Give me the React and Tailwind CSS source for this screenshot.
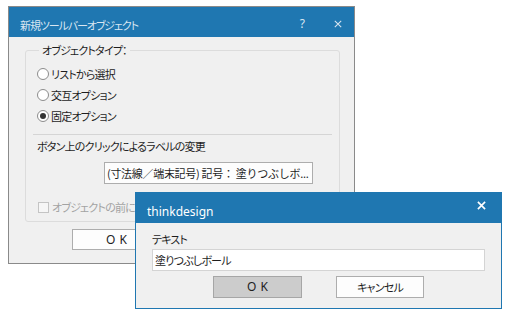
const jp = "font-['Noto_Sans_CJK_JP','Noto_Sans',sans-serif] [font-feature-settings:'palt'] text-[11px] tracking-[-0.8px]";

function Radio({ checked, label }) {
  return (
    <div className="flex h-[21px] items-center">
      <span className="flex h-[12px] w-[12px] items-center justify-center rounded-full border border-[#8c8c8c] bg-white">
        {checked && <span className="h-[6px] w-[6px] rounded-full bg-[#333333]" />}
      </span>
      <span className="ml-[2px] leading-[16px]">{label}</span>
    </div>
  );
}

function CloseIcon({ className, width = 1.4 }) {
  return (
    <svg viewBox="0 0 10 10" className={className}>
      <path d="M1 1 L9 9 M9 1 L1 9" stroke="currentColor" strokeWidth={width} fill="none" />
    </svg>
  );
}

export default function App() {
  return (
    <div className={`relative h-[320px] w-[510px] overflow-hidden bg-white text-[#1e1e1e] ${jp}`}>
      {/* main dialog */}
      <div className="absolute left-[8px] top-[6px] flex h-[258px] w-[347px] flex-col border border-[#8a8a8a] bg-[#f0f0f0]">
        <div className="flex h-[30px] shrink-0 justify-between bg-[#1f77b1] text-[#d9e6f1]">
          <span className="ml-[11px] mt-[10px] leading-[16px] tracking-[-1.1px]">新規ツールバーオブジェクト</span>
          <div className="mr-[12px] mt-[3px] flex items-center gap-[29px]">
            <span className="font-['Noto_Sans',sans-serif] text-[12px] leading-[16px] tracking-normal">?</span>
            <CloseIcon className="h-[8px] w-[8px]" width={1.3} />
          </div>
        </div>
        <fieldset className="ml-[16px] mt-[5px] h-[180px] w-[315px] rounded-[3px] border border-[#dcdcdc] px-[7px] pt-[5px]">
          <legend className="ml-[6px] px-[3px] leading-[16px]">オブジェクトタイプ：</legend>
          <div className="pl-[4px]">
            <Radio label="リストから選択" />
            <Radio label="交互オプション" />
            <Radio checked label="固定オプション" />
          </div>
          <div className="mt-[8px] h-px bg-[#d5d5d5]" />
          <div className="ml-[4px] mt-[3px] leading-[16px]">ボタン上のクリックによるラベルの変更</div>
          <div className="ml-[71px] mt-[8px] flex h-[22px] w-[209px] items-center overflow-hidden whitespace-nowrap border border-[#adadad] bg-[#fdfdfd] pl-[2px] leading-[16px] tracking-[-0.3px] [font-feature-settings:normal]">
            (寸法線／端末記号) 記号： 塗りつぶしボ...
          </div>
          <div className="ml-[5px] mt-[15px] flex items-center text-[#a3a3a3]">
            <span className="h-[11px] w-[11px] border border-[#c4c4c4] bg-[#f6f6f6]" />
            <span className="ml-[3px] whitespace-nowrap leading-[16px]">オブジェクトの前にテキストを表示</span>
          </div>
        </fieldset>
        <div className="ml-[63px] mt-[7px] flex h-[21px] w-[89px] items-center justify-center border border-[#adadad] bg-[#fdfdfd] pl-[4px] font-['Noto_Sans',sans-serif] text-[12px] tracking-[4px]">
          OK
        </div>
      </div>

      {/* thinkdesign dialog */}
      <div className="absolute left-[135px] top-[192px] flex h-[117px] w-[367px] flex-col border border-[#1f77b1] bg-[#f0f0f0]">
        <div className="flex h-[30px] shrink-0 justify-between bg-[#1f77b1] text-white">
          <span className="ml-[11px] mt-[11px] font-['Noto_Sans',sans-serif] text-[12px] leading-[16px] tracking-normal">thinkdesign</span>
          <CloseIcon className="mr-[15px] mt-[8px] h-[9px] w-[9px]" width={1.8} />
        </div>
        <div className="flex flex-col px-[16px] pt-[8px]">
          <div className="leading-[16px]">テキスト</div>
          <div className="mt-[2px] flex h-[22px] w-[333px] items-center border border-[#d4d4d4] bg-white pl-[2px] leading-[16px]">
            塗りつぶしボール
          </div>
          <div className="mt-[5px] flex justify-center gap-[34px]">
            <div className="flex h-[22px] w-[89px] items-center justify-center border border-[#a6a6a6] bg-[#cccccc] pl-[4px] font-['Noto_Sans',sans-serif] text-[12px] tracking-[4px]">
              OK
            </div>
            <div className="flex h-[22px] w-[88px] items-center justify-center border border-[#adadad] bg-[#fdfdfd]">
              キャンセル
            </div>
          </div>
        </div>
      </div>
    </div>
  );
}
